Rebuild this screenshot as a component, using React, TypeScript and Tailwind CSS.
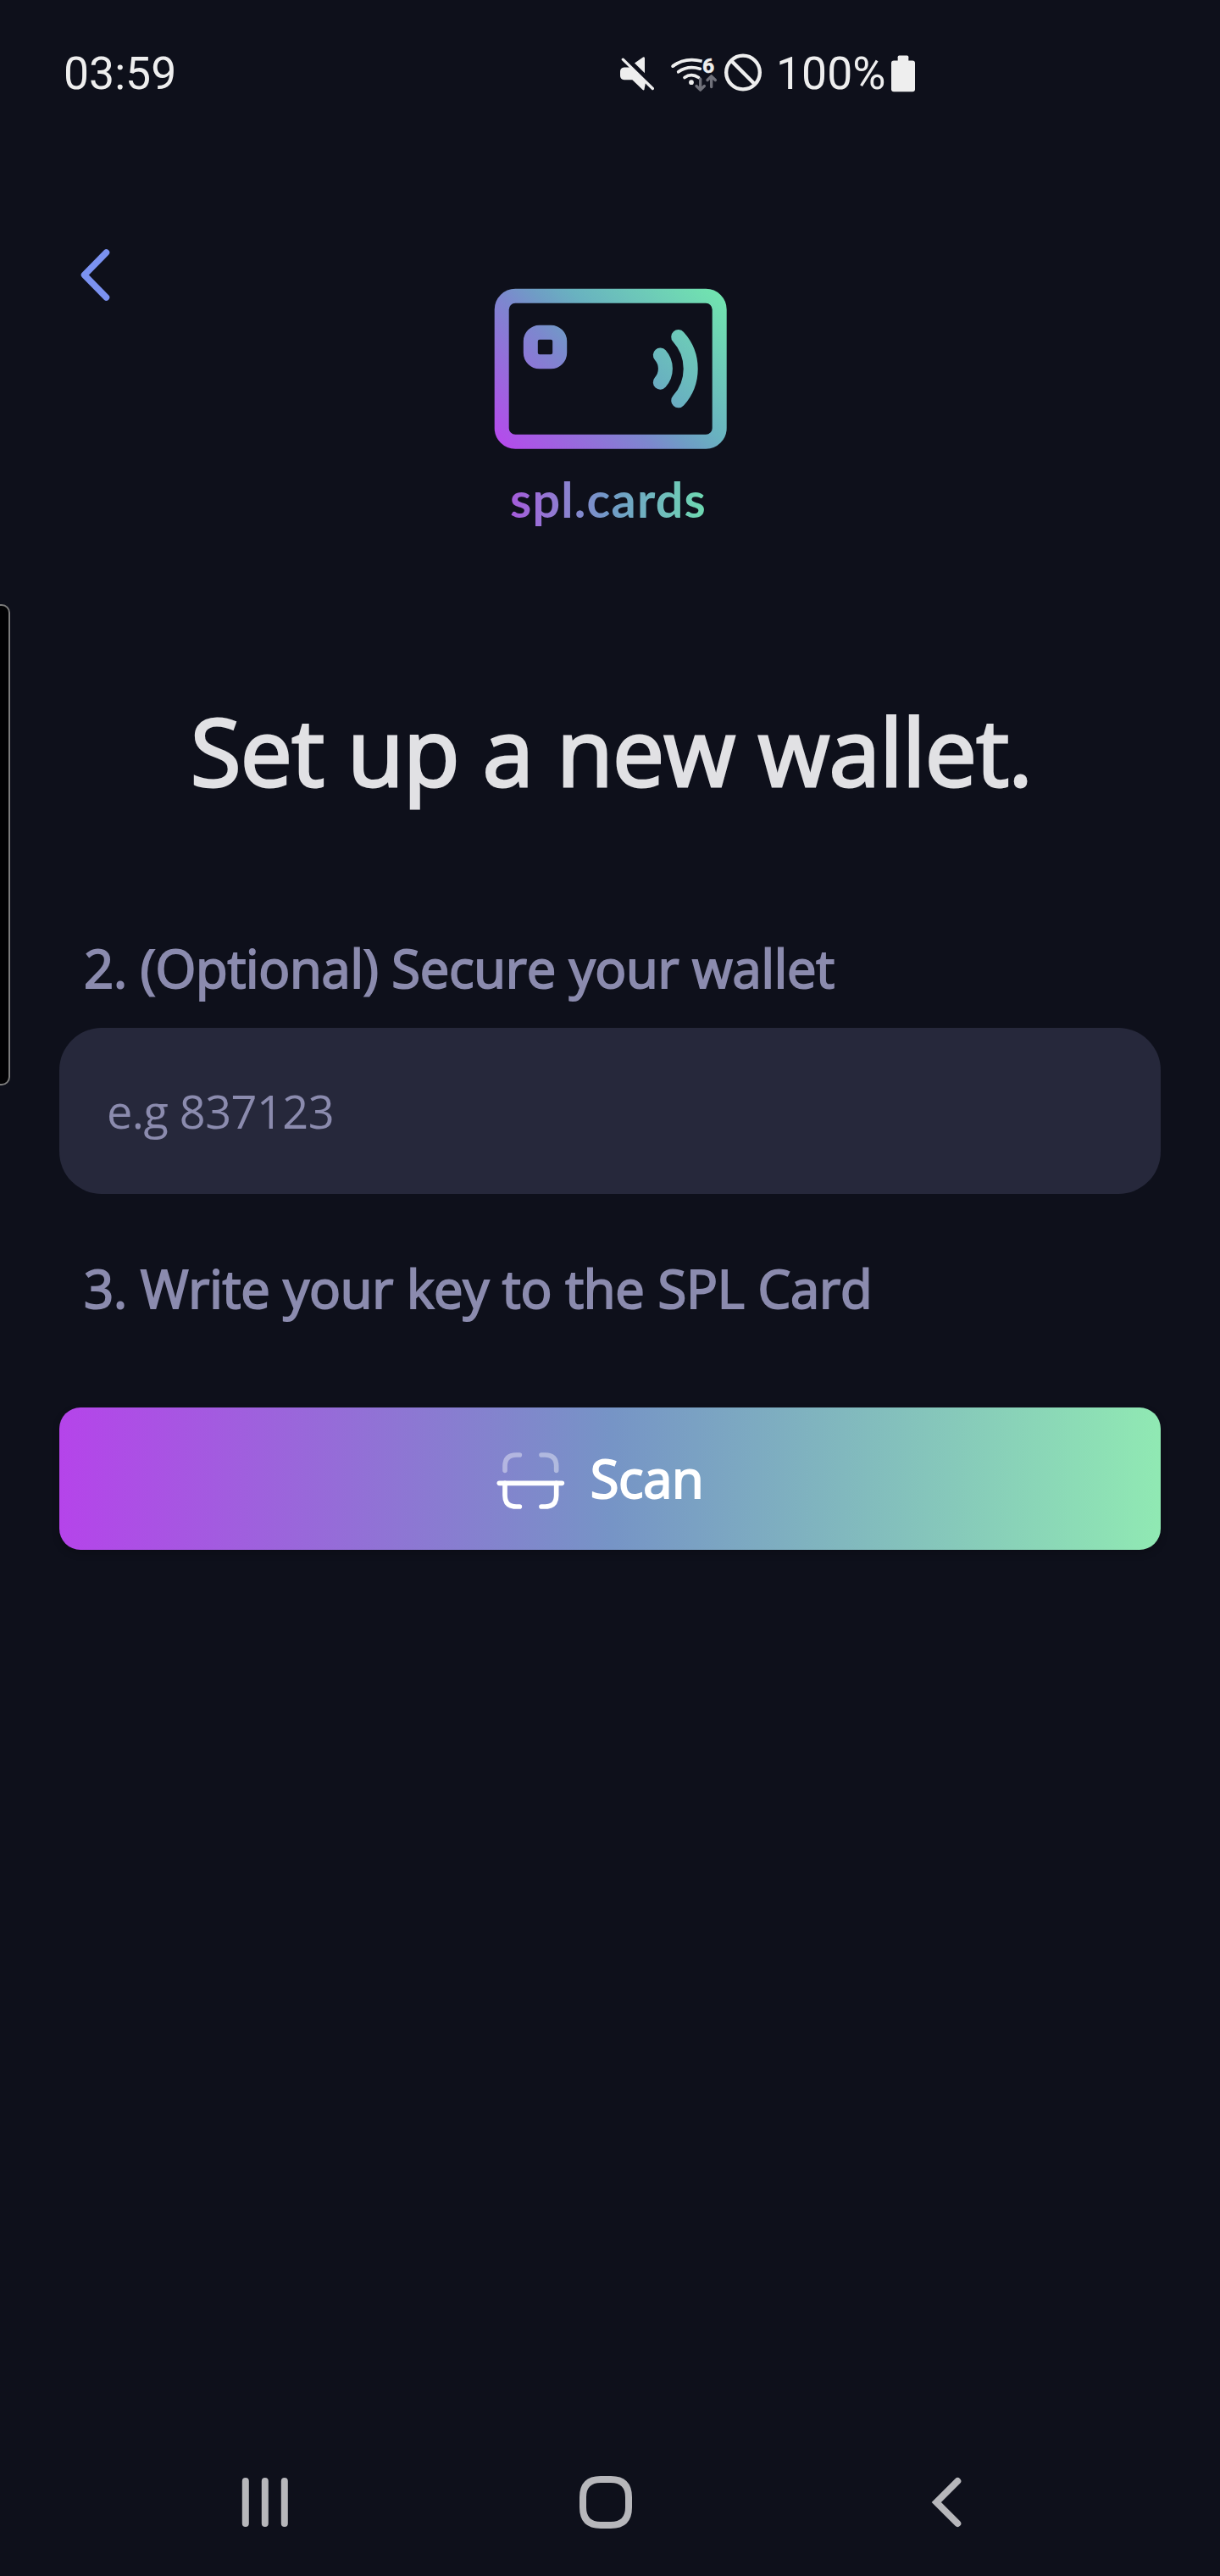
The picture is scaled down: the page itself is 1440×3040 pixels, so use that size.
const ICON = "#eeeeee";

function StatusBar() {
  return (
    <div className="flex h-[173px] shrink-0 items-center pl-[75px] font-['Roboto',sans-serif] text-[53.5px] leading-none text-[#eeeeee]">
      <span className="w-[655px]">03:59</span>
      <svg className="h-[50px] w-11 shrink-0" viewBox="90 64.5 132 150" fill={ICON}>
        <path d="M147 102 L177 81 Q183 78 183 85 V137 Z" />
        <path d="M110 117 H132 L186 172 L182 192 Q182 201 175 196 L139 161 H110 Q96 160 96 146 V132 Q96 118 110 117 Z" />
        <path d="M106 89 L211 192" stroke={ICON} strokeWidth="10" strokeLinecap="round" />
      </svg>
      <svg className="ml-4 h-[50px] w-[60px] shrink-0" viewBox="270 64.5 180 150" fill="none" strokeLinecap="round" strokeLinejoin="round">
        <g stroke={ICON} strokeWidth="11">
          <path d="M282 113 Q325 80 386 95" strokeLinecap="butt" />
          <path d="M282 113 Q290 107 298 103" />
          <path d="M302 133 Q335 109 379 122" />
          <path d="M324 153 Q348 136 374 153" />
        </g>
        <circle cx="348" cy="170" r="8.5" fill={ICON} />
        <text x="387" y="135" fontSize="74" fontWeight="700" fontFamily="Roboto, sans-serif" fill={ICON} stroke={ICON} strokeWidth="1.5">6</text>
        <g stroke="#70717a" strokeWidth="10">
          <path d="M380 158 V195 M366 183 L380 197 L394 183" />
          <path d="M419 186 V150 M405 162 L419 148 L433 162" />
        </g>
      </svg>
      <svg className="ml-[3px] h-[50px] w-[50px] shrink-0" viewBox="459 64.5 150 150" fill="none" stroke={ICON} strokeWidth="13">
        <circle cx="531" cy="135" r="59.5" />
        <path d="M489 93 L573 177" />
      </svg>
      <span className="ml-[13px] w-[134px]">100%</span>
      <svg className="h-[50px] w-8 shrink-0" viewBox="1050 64.5 96 150" fill={ICON}>
        <rect x="1079" y="75" width="38" height="30" rx="5" />
        <rect x="1056" y="93" width="84" height="110" rx="9" />
      </svg>
    </div>
  );
}

function Logo() {
  return (
    <div className="mt-[167px] flex flex-col items-center">
      <svg className="ml-[2px] h-[190px] w-[276px]" viewBox="583 340 276 190" fill="none">
        <defs>
          <linearGradient id="card" gradientUnits="userSpaceOnUse" x1="605" y1="551" x2="836.5" y2="319.5">
            <stop offset="0" stopColor="#b946ee" />
            <stop offset="0.41" stopColor="#7c88ce" />
            <stop offset="0.5" stopColor="#6f9dc5" />
            <stop offset="0.6" stopColor="#69b2c0" />
            <stop offset="1" stopColor="#72e8ae" />
          </linearGradient>
        </defs>
        <g stroke="url(#card)" strokeWidth="17" strokeLinecap="round">
          <rect x="592.2" y="349.2" width="257" height="172" rx="16" />
          <rect x="626.3" y="392.3" width="34.4" height="34.4" rx="10.5" />
          <path d="M779.3 419 A24.3 24.3 0 0 1 779.3 451.2" />
          <path d="M800.7 397.6 A56 56 0 0 1 800.7 472.8" />
        </g>
      </svg>
      <span className="mt-[19px] mr-[4px] bg-linear-to-r from-[#a45adb] via-[#7099c7] to-[#6edab0] bg-clip-text font-['Lato',sans-serif] text-[57.5px] leading-[80px] font-bold tracking-[1.2px] whitespace-nowrap text-transparent">
        spl.cards
      </span>
    </div>
  );
}

function Header() {
  return (
    <header className="grid grid-cols-[1fr_auto_1fr]">
      <button className="mt-[121px] ml-[95px] h-[61px] w-9" aria-label="Back">
        <svg className="h-[61px] w-9" viewBox="95 294 36 61" fill="none" stroke="#7b92f1" strokeWidth="7.5" strokeLinecap="round" strokeLinejoin="round">
          <path d="M125.5 298 L99.5 324.5 L125.5 351" />
        </svg>
      </button>
      <Logo />
    </header>
  );
}

function ScanIcon() {
  return (
    <svg className="h-20 w-[81px]" viewBox="78 165 243 240" fill="none" stroke="#ffffff" strokeWidth="17" strokeLinecap="round">
      <path d="M108 256 V241 Q108 201 148 201 H160 M237 201 H250 Q290 201 290 241 V256" opacity="0.4" />
      <path d="M108 301 V344 Q108 384 148 384 H160 M237 384 H250 Q290 384 290 344 V301" />
      <path d="M88 301 H310" />
    </svg>
  );
}

function NavBar() {
  return (
    <nav className="mt-auto flex h-[174px] shrink-0 items-center pl-[285px]">
      <svg className="h-[62px] w-14" viewBox="285 2922 56 62" fill="#b7b7bb">
        <rect x="285.8" y="2924" width="8" height="58" rx="4" />
        <rect x="308.8" y="2924" width="8" height="58" rx="4" />
        <rect x="331.8" y="2924" width="8" height="58" rx="4" />
      </svg>
      <svg className="ml-[343px] h-[62px] w-[62px]" viewBox="0 0 62 62" fill="none" stroke="#b7b7bb" strokeWidth="8">
        <path d="M25 4 H37 C51 4 58 11 58 25 V37 C58 51 51 58 37 58 H25 C11 58 4 51 4 37 V25 C4 11 11 4 25 4 Z" />
      </svg>
      <svg className="ml-[353px] h-[62px] w-9" viewBox="1099 2922 36 62" fill="none" stroke="#b7b7bb" strokeWidth="8" strokeLinecap="round">
        <path d="M1130.3 2928 L1105.3 2953 L1130.3 2978" />
      </svg>
    </nav>
  );
}

export default function App() {
  return (
    <div className="relative flex h-[3040px] w-[1440px] flex-col overflow-hidden bg-[#0e101b] font-['Open_Sans',sans-serif]">
      <StatusBar />
      <Header />
      <h1 className="mt-[181px] pl-[3px] text-center text-[109px] leading-[152px] font-normal tracking-[-0.75px] whitespace-nowrap text-[#e1e1e4] [-webkit-text-stroke:3px_#e1e1e4]">
        Set up a new wallet.
      </h1>
      <main className="px-[70px] text-[61.5px] leading-[84px]">
        <p className="mt-[138px] pl-[29px] tracking-[-0.25px] whitespace-nowrap text-[#8b8bae] [-webkit-text-stroke:2px_#8b8bae]">
          2. (Optional) Secure your wallet
        </p>
        <input
          className="mt-[29px] block h-[196px] w-full rounded-[50px] bg-[#26283b] px-14 text-[54px] tracking-[-0.5px] outline-none placeholder:text-[#8b8bae] placeholder:opacity-100"
          placeholder="e.g 837123"
        />
        <p className="mt-[69px] pl-[29px] tracking-[-0.2px] whitespace-nowrap text-[#8b8bae] [-webkit-text-stroke:2px_#8b8bae]">
          3. Write your key to the SPL Card
        </p>
        <button className="mt-[99px] flex h-[168px] w-full items-center justify-center gap-[30px] rounded-[25px] bg-linear-[90deg,#b544ea,#7694c6_50%,#90e9b3] pr-6 tracking-[-0.4px] text-white shadow-[0_4px_10px_rgba(0,0,0,0.2)] [-webkit-text-stroke:2px_white]">
          <ScanIcon />
          <span className="pb-0.5">Scan</span>
        </button>
      </main>
      <NavBar />
      <div className="absolute top-[713px] -left-5 h-[568px] w-8 rounded-[10px] border-2 border-[#7b7b7b] bg-[#020204]" />
    </div>
  );
}
